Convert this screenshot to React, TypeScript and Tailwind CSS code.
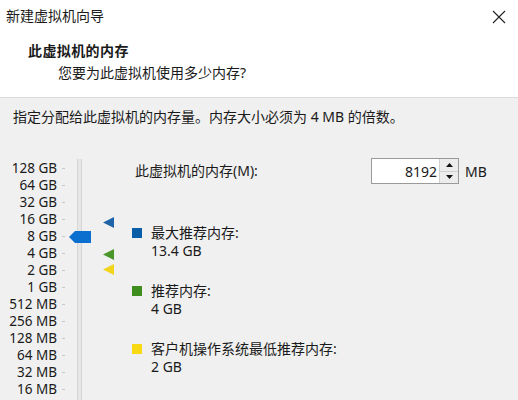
import React from "react";

const labels = [
  "128 GB",
  "64 GB",
  "32 GB",
  "16 GB",
  "8 GB",
  "4 GB",
  "2 GB",
  "1 GB",
  "512 MB",
  "256 MB",
  "128 MB",
  "64 MB",
  "32 MB",
  "16 MB",
];

function Legend({ color, title, value }: { color: string; title: string; value: string }) {
  return (
    <div className="flex items-start h-[36px]">
      <div className={`w-[10px] h-[10px] mt-[4px] ${color}`} />
      <div className="ml-[9px] leading-[18px]">
        <div>{title}</div>
        <div>{value}</div>
      </div>
    </div>
  );
}

export default function App() {
  return (
    <div
      className="w-[518px] h-[400px] overflow-hidden bg-[#f0f0f0] text-[14px] text-[#1a1a1a]"
      style={{ fontFamily: '"Noto Sans", "Noto Sans CJK SC", sans-serif' }}
    >
      {/* header */}
      <div className="bg-white h-[98px] border-b border-[#d9d9d9]">
        <div className="h-[32px] flex items-center justify-between pl-[6px] pr-[12px]">
          <span className="leading-[18px]">新建虚拟机向导</span>
          <svg width="14" height="14" viewBox="0 0 14 14" className="mt-[1px]">
            <path d="M1 1 L13 13 M13 1 L1 13" stroke="#222" strokeWidth="1.1" />
          </svg>
        </div>
        <div className="pl-[28px] mt-[10px] font-bold leading-[18px] tracking-[0.4px]">此虚拟机的内存</div>
        <div className="pl-[58px] mt-[4px] leading-[18px]">您要为此虚拟机使用多少内存?</div>
      </div>

      {/* body */}
      <div className="pl-[13px] pt-[10px] leading-[18px]">
        指定分配给此虚拟机的内存量。内存大小必须为 4 MB 的倍数。
      </div>

      <div className="flex mt-[33px]">
        {/* slider */}
        <div className="relative w-[120px] h-[260px] flex">
          <div className="w-[57px] pt-[1px] flex flex-col items-end">
            {labels.map((l) => (
              <div key={l} className="h-[17px] leading-[17px] text-[13.5px] whitespace-nowrap">
                {l}
              </div>
            ))}
          </div>
          <div className="w-[12px] pt-[1px] flex flex-col items-center">
            {labels.map((l) => (
              <div key={l} className="h-[17px] flex items-center">
                <div className="w-[3px] h-[1px] bg-[#c8c8c8]" />
              </div>
            ))}
          </div>
          <div className="ml-[8px] w-[5px] h-full border-x border-[#d6d6d6] bg-[#e6e6e6]" />
          {/* thumb */}
          <svg className="absolute left-[69px] top-[72px]" width="22" height="12" viewBox="0 0 22 12">
            <path d="M0 6 L6 0 H22 V12 H6 Z" fill="#0b6fcf" />
          </svg>
          {/* markers */}
          <svg className="absolute left-[103px] top-[58px]" width="11" height="11" viewBox="0 0 11 11">
            <path d="M0 5.5 L11 0 V11 Z" fill="#1f63a8" />
          </svg>
          <svg className="absolute left-[103px] top-[90px]" width="11" height="11" viewBox="0 0 11 11">
            <path d="M0 5.5 L11 0 V11 Z" fill="#4b9628" />
          </svg>
          <svg className="absolute left-[103px] top-[105px]" width="11" height="11" viewBox="0 0 11 11">
            <path d="M0 5.5 L11 0 V11 Z" fill="#f2d41c" />
          </svg>
        </div>

        {/* right */}
        <div className="ml-[12px] flex flex-col">
          <div className="flex items-center mt-[-1px]">
            <div className="w-[239px] pl-[3px] leading-[18px]">此虚拟机的内存(M):</div>
            <div className="flex h-[26px] border border-[#9a9a9a] bg-white">
              <div className="w-[67px] flex items-center justify-end pr-[2px]">8192</div>
              <div className="w-[19px] flex flex-col border-l border-[#d0d0d0]">
                <div className="flex-1 bg-[#ececec] border-b border-[#cfcfcf] flex items-center justify-center">
                  <svg width="7" height="4" viewBox="0 0 7 4">
                    <path d="M0 4 L3.5 0 L7 4 Z" fill="#111" />
                  </svg>
                </div>
                <div className="flex-1 bg-[#ececec] flex items-center justify-center">
                  <svg width="7" height="4" viewBox="0 0 7 4">
                    <path d="M0 0 L3.5 4 L7 0 Z" fill="#111" />
                  </svg>
                </div>
              </div>
            </div>
            <div className="ml-[6px]">MB</div>
          </div>

          <div className="mt-[40px] flex flex-col gap-[22px]">
            <Legend color="bg-[#0a5ea8]" title="最大推荐内存:" value="13.4 GB" />
            <Legend color="bg-[#3f8c1f]" title="推荐内存:" value="4 GB" />
            <Legend color="bg-[#f7da14]" title="客户机操作系统最低推荐内存:" value="2 GB" />
          </div>
        </div>
      </div>
    </div>
  );
}
